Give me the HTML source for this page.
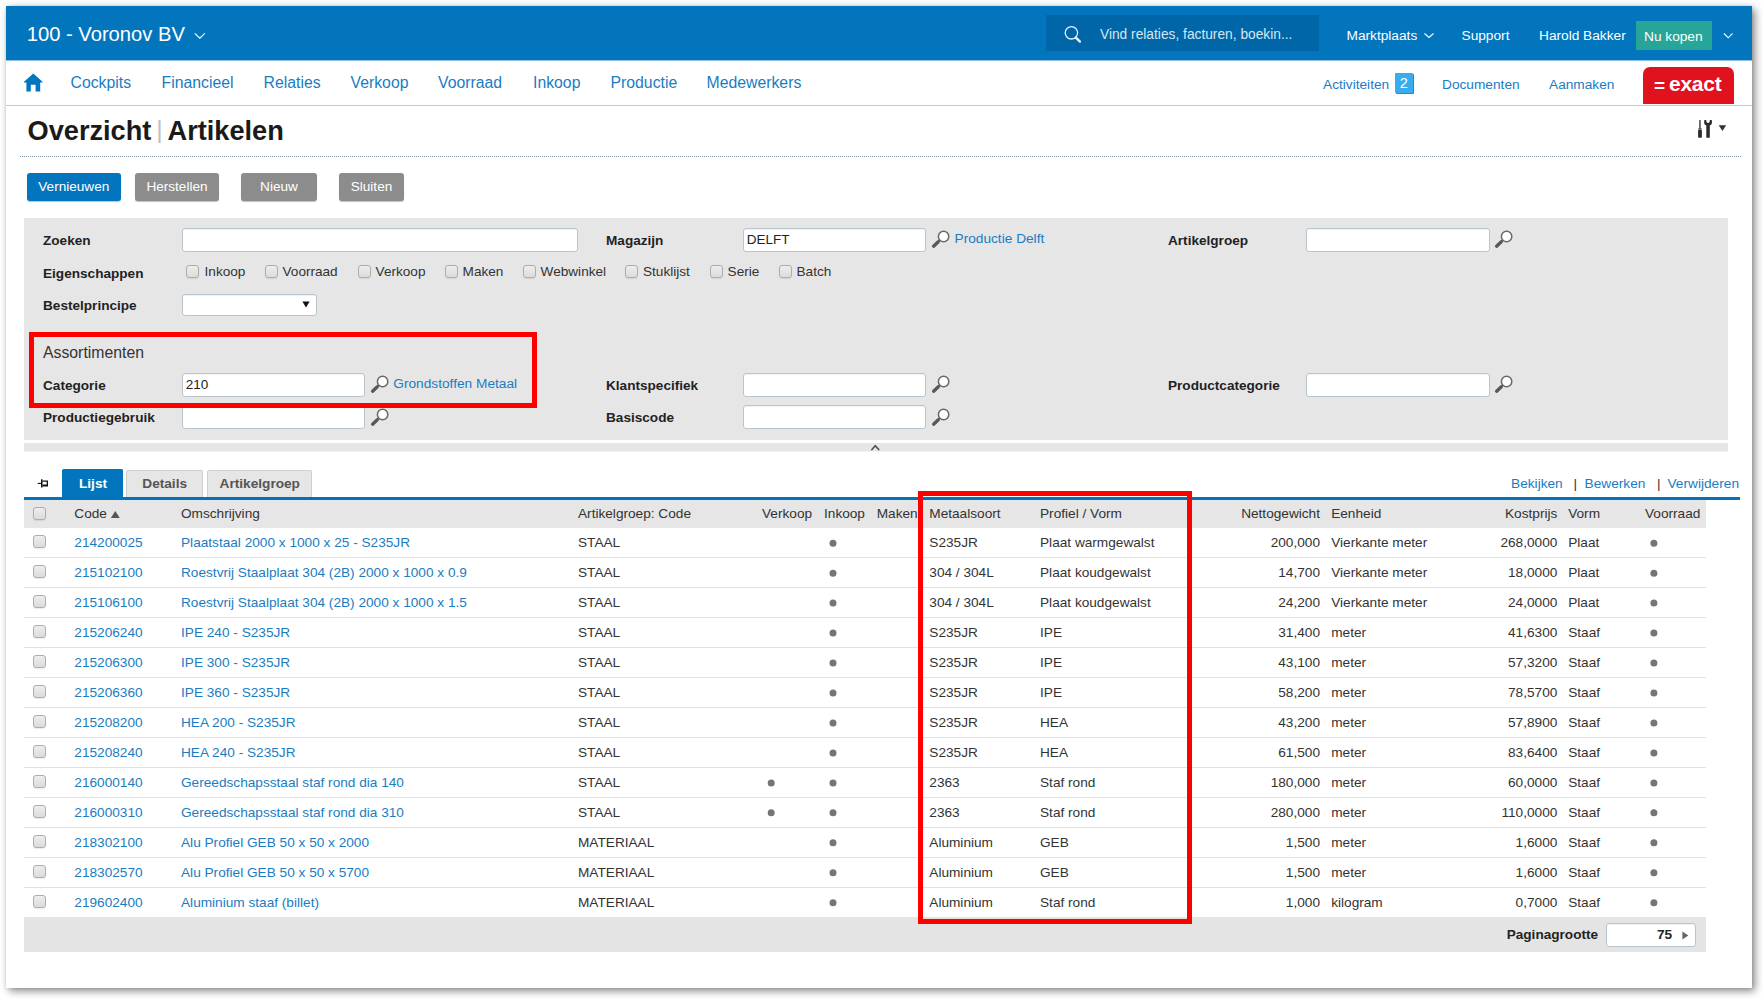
<!DOCTYPE html>
<html lang="nl"><head><meta charset="utf-8"><title>Overzicht | Artikelen</title>
<style>
html,body{margin:0;padding:0;background:#fff;}
body{width:1763px;height:999px;position:relative;overflow:hidden;font-family:"Liberation Sans",sans-serif;color:#333;font-size:13.65px;}
#frame{position:absolute;left:6px;top:6px;width:1746px;height:982px;background:#fff;box-shadow:3px 3px 8px rgba(0,0,0,.47),0 0 3px rgba(0,0,0,.10);}
#page{position:absolute;left:0;top:0;width:1763px;height:999px;}
.abs,.t,.cb,.mag,.inp,.btn,.tab,.dot{position:absolute;}
.t{white-space:nowrap;line-height:20px;}
.b{font-weight:bold;color:#222;}
.lk{color:#1b7cc2;}
.w{color:#fff;}
.nav{font-size:15.8px;color:#1b7cc2;}
.cb{width:11px;height:11px;border:1px solid #adadad;border-radius:3px;background:linear-gradient(#ededed,#dcdcdc);box-shadow:0 1px 1px rgba(0,0,0,.08);}
.inp{height:22px;border:1px solid #b9c5cd;border-radius:3px;background:#fff;box-shadow:inset 0 1px 1px rgba(0,0,0,.06);}
.btn{top:173px;height:28px;line-height:27.5px;border-radius:3px;color:#fff;text-align:center;font-size:13.6px;box-shadow:0 1px 1px rgba(0,0,0,.25);}
.tab{top:469.5px;height:28px;line-height:28px;text-align:center;font-weight:bold;box-sizing:border-box;border:1px solid #d0d0d0;border-bottom:none;background:#e6e6e6;color:#555;border-radius:2px 2px 0 0;}
.dot{width:7px;height:7px;border-radius:50%;background:#707070;}
.ln{position:absolute;left:24px;width:1682px;height:1px;background:#e2e2e2;}
</style></head><body>
<div id="frame"></div>
<div id="page">

<div class="abs" style="left:6px;top:6px;width:1746px;height:54px;background:#0275bc"></div><div class="abs" style="left:6px;top:60px;width:1746px;height:1px;background:rgba(2,117,188,.45)"></div>
<span class="t w" style="left:26.7px;top:24px;font-size:20.2px">100 - Voronov BV</span>
<svg class="abs" style="left:193px;top:31px" width="14" height="10" viewBox="0 0 14 10"><path d="M1.8 2.4 L6.8 7.2 L11.8 2.4" fill="none" stroke="#fff" stroke-width="1.15"/></svg>
<div class="abs" style="left:1045.5px;top:15px;width:273px;height:36px;background:#0066a8"></div>
<svg class="abs" style="left:1062px;top:24px" width="22" height="21" viewBox="0 0 22 21"><circle cx="9.4" cy="8.8" r="6.2" fill="none" stroke="#e8f2fa" stroke-width="1.3"/><path d="M13.9 13.6 L17.9 17.6" stroke="#e8f2fa" stroke-width="2.4" stroke-linecap="round"/></svg>
<span class="t " style="left:1100px;top:25px;color:#d3e6f4;font-size:13.75px">Vind relaties, facturen, boekin...</span>
<span class="t w" style="left:1346.5px;top:26px;font-size:13.7px">Marktplaats</span>
<svg class="abs" style="left:1423px;top:31px" width="12" height="9" viewBox="0 0 12 9"><path d="M1.5 2.5 L6 6.5 L10.5 2.5" fill="none" stroke="#fff" stroke-width="1.1"/></svg>
<span class="t w" style="left:1461.5px;top:26px;font-size:13.7px">Support</span>
<span class="t w" style="left:1539px;top:26px;font-size:13.7px">Harold Bakker</span>
<div class="abs" style="left:1635.5px;top:21px;width:76.5px;height:29px;background:#27a599"></div>
<span class="t w" style="left:1644px;top:27px;font-size:13.7px">Nu kopen</span>
<svg class="abs" style="left:1722px;top:31px" width="12" height="9" viewBox="0 0 12 9"><path d="M2 2.5 L6.2 6.8 L10.5 2.5" fill="none" stroke="#fff" stroke-width="1.1"/></svg>
<div class="abs" style="left:6px;top:105px;width:1746px;height:1px;background:#c8c8c8"></div>
<svg class="abs" style="left:23px;top:73px" width="21" height="20" viewBox="0 0 21 20"><path d="M10.3 0.5 L1.0 8.7 L1.0 9.4 L3.4 9.4 L3.4 18.6 L7.8 18.6 L7.8 11.8 L12.6 11.8 L12.6 18.6 L17.2 18.6 L17.2 9.4 L19.5 9.4 L19.5 8.7 Z" fill="#0476be"/></svg>
<span class="t nav" style="left:70.5px;top:73px;">Cockpits</span>
<span class="t nav" style="left:161.5px;top:73px;">Financieel</span>
<span class="t nav" style="left:263.5px;top:73px;">Relaties</span>
<span class="t nav" style="left:350.5px;top:73px;">Verkoop</span>
<span class="t nav" style="left:438px;top:73px;">Voorraad</span>
<span class="t nav" style="left:533px;top:73px;">Inkoop</span>
<span class="t nav" style="left:610.5px;top:73px;">Productie</span>
<span class="t nav" style="left:706.5px;top:73px;">Medewerkers</span>
<span class="t lk" style="left:1323px;top:75px;font-size:13.7px">Activiteiten</span>
<div class="abs" style="left:1395px;top:73px;width:17.5px;height:19.5px;background:#38adee;border-radius:1px;box-shadow:1px 1px 0 #2b88c6,1px 1px 1px rgba(0,0,0,.2);color:#fff;text-align:center;line-height:21px;font-size:14.5px">2</div>
<span class="t lk" style="left:1442px;top:75px;font-size:13.7px">Documenten</span>
<span class="t lk" style="left:1549px;top:75px;font-size:13.7px">Aanmaken</span>
<div class="abs" style="left:1643px;top:67px;width:91px;height:36.5px;background:#e0121d;border-radius:7px 7px 0 0"></div>
<span class="t w b" style="left:1654px;top:76px;font-size:19px;color:#fff">=</span>
<span class="t w b" style="left:1669px;top:74px;font-size:21px;color:#fff;letter-spacing:-0.25px">exact</span>
<span class="t b" style="left:27.5px;top:121px;font-size:27.2px;color:#1a1a1a">Overzicht</span>
<span class="abs" style="left:156.3px;top:116.2px;font-size:24.6px;line-height:28px;color:#b9c1c9">|</span>
<span class="t b" style="left:167.5px;top:121px;font-size:27.2px;color:#1a1a1a">Artikelen</span>
<div class="abs" style="left:20px;top:156px;width:1721px;height:0;border-top:1px dotted #8195a1"></div>
<svg class="abs" style="left:1696px;top:119px" width="32" height="20" viewBox="0 0 32 20"><rect x="3.1" y="1" width="1.7" height="8.8" rx="0.5" fill="#5a5a5a"/><rect x="2.4" y="9.2" width="3.1" height="1.4" fill="#444"/><rect x="2.1" y="10.8" width="3.8" height="8" rx="0.8" fill="#2b2b2b"/><path d="M8.2 1.6 Q8.2 1 8.9 1 L9.9 1 Q10.4 1 10.4 1.6 L10.4 2.6 Q10.4 3.9 12.05 3.9 Q13.7 3.9 13.7 2.6 L13.7 1.6 Q13.7 1 14.3 1 L15.3 1 Q15.9 1 15.9 1.6 L15.9 4.2 Q15.9 5.8 13.8 6.4 L13.8 18.2 Q13.8 18.8 13.2 18.8 L10.9 18.8 Q10.3 18.8 10.3 18.2 L10.3 6.4 Q8.2 5.8 8.2 4.2 Z" fill="#2b2b2b"/><path d="M22.7 6.2 L30.2 6.2 L26.45 12.1 Z" fill="#333"/></svg>
<div class="btn" style="left:27px;width:93.6px;background:#0375be">Vernieuwen</div>
<div class="btn" style="left:135px;width:84px;background:#8c8c8c">Herstellen</div>
<div class="btn" style="left:241px;width:76px;background:#8c8c8c">Nieuw</div>
<div class="btn" style="left:339px;width:65px;background:#8c8c8c">Sluiten</div>
<div class="abs" style="left:24px;top:218px;width:1703.5px;height:222px;background:#e6e6e6"></div>
<div class="abs" style="left:24px;top:443px;width:1703.5px;height:8px;background:#e6e6e6"></div><div class="abs" style="left:24px;top:451px;width:1703.5px;height:1px;background:#f1f1f1"></div>
<svg class="abs" style="left:869px;top:443px" width="12" height="8" viewBox="0 0 12 8"><path d="M2.9 6.5 L6.3 2.7 L9.7 6.5" fill="none" stroke="#505050" stroke-width="1.7" stroke-linecap="round" stroke-linejoin="round"/></svg>
<span class="t b" style="left:43px;top:231px;font-size:13.6px">Zoeken</span>
<span class="t b" style="left:43px;top:264px;font-size:13.6px">Eigenschappen</span>
<span class="t b" style="left:43px;top:296px;font-size:13.6px">Bestelprincipe</span>
<span class="t b" style="left:43px;top:376px;font-size:13.6px">Categorie</span>
<span class="t b" style="left:43px;top:408px;font-size:13.6px">Productiegebruik</span>
<span class="t b" style="left:606px;top:231px;font-size:13.6px">Magazijn</span>
<span class="t b" style="left:606px;top:376px;font-size:13.6px">Klantspecifiek</span>
<span class="t b" style="left:606px;top:408px;font-size:13.6px">Basiscode</span>
<span class="t b" style="left:1168px;top:231px;font-size:13.6px">Artikelgroep</span>
<span class="t b" style="left:1168px;top:376px;font-size:13.6px">Productcategorie</span>
<span class="t " style="left:43px;top:343px;font-size:15.8px;color:#333">Assortimenten</span>
<div class="inp" style="left:181.6px;top:228px;width:394.5px"></div>
<div class="inp" style="left:742.5px;top:228px;width:181.3px"><span style="position:absolute;left:3.2px;top:1px;line-height:20px;font-size:13.5px;color:#222">DELFT</span></div>
<div class="inp" style="left:1306px;top:228px;width:181.8px"></div>
<div class="inp" style="left:181.6px;top:373px;width:181.8px"><span style="position:absolute;left:3.2px;top:1px;line-height:20px;font-size:13.5px;color:#222">210</span></div>
<div class="inp" style="left:742.5px;top:373px;width:181.3px"></div>
<div class="inp" style="left:1306px;top:373px;width:181.8px"></div>
<div class="inp" style="left:181.6px;top:405px;width:181.8px"></div>
<div class="inp" style="left:742.5px;top:405px;width:181.3px"></div>
<div class="inp" style="left:181.6px;top:294px;width:133.3px;height:20px"></div>
<svg class="abs" style="left:301px;top:300px" width="10" height="9" viewBox="0 0 10 9"><path d="M1.4 1.6 L8.6 1.6 L5 7.6 Z" fill="#111"/></svg>
<svg class="mag" style="left:930.8px;top:230px" width="20" height="19" viewBox="0 0 20 19"><circle cx="12.6" cy="6.5" r="5.2" fill="#fff" stroke="#686868" stroke-width="1.5"/><path d="M9 10.2 L7 12" stroke="#606060" stroke-width="1.6"/><path d="M7.3 11.7 L2.6 16.2" stroke="#585858" stroke-width="3.3" stroke-linecap="round"/></svg>
<svg class="mag" style="left:1494.3px;top:230px" width="20" height="19" viewBox="0 0 20 19"><circle cx="12.6" cy="6.5" r="5.2" fill="#fff" stroke="#686868" stroke-width="1.5"/><path d="M9 10.2 L7 12" stroke="#606060" stroke-width="1.6"/><path d="M7.3 11.7 L2.6 16.2" stroke="#585858" stroke-width="3.3" stroke-linecap="round"/></svg>
<svg class="mag" style="left:370px;top:374.5px" width="20" height="19" viewBox="0 0 20 19"><circle cx="12.6" cy="6.5" r="5.2" fill="#fff" stroke="#686868" stroke-width="1.5"/><path d="M9 10.2 L7 12" stroke="#606060" stroke-width="1.6"/><path d="M7.3 11.7 L2.6 16.2" stroke="#585858" stroke-width="3.3" stroke-linecap="round"/></svg>
<svg class="mag" style="left:930.8px;top:374.5px" width="20" height="19" viewBox="0 0 20 19"><circle cx="12.6" cy="6.5" r="5.2" fill="#fff" stroke="#686868" stroke-width="1.5"/><path d="M9 10.2 L7 12" stroke="#606060" stroke-width="1.6"/><path d="M7.3 11.7 L2.6 16.2" stroke="#585858" stroke-width="3.3" stroke-linecap="round"/></svg>
<svg class="mag" style="left:1494.3px;top:374.5px" width="20" height="19" viewBox="0 0 20 19"><circle cx="12.6" cy="6.5" r="5.2" fill="#fff" stroke="#686868" stroke-width="1.5"/><path d="M9 10.2 L7 12" stroke="#606060" stroke-width="1.6"/><path d="M7.3 11.7 L2.6 16.2" stroke="#585858" stroke-width="3.3" stroke-linecap="round"/></svg>
<svg class="mag" style="left:370px;top:407.5px" width="20" height="19" viewBox="0 0 20 19"><circle cx="12.6" cy="6.5" r="5.2" fill="#fff" stroke="#686868" stroke-width="1.5"/><path d="M9 10.2 L7 12" stroke="#606060" stroke-width="1.6"/><path d="M7.3 11.7 L2.6 16.2" stroke="#585858" stroke-width="3.3" stroke-linecap="round"/></svg>
<svg class="mag" style="left:930.8px;top:407.5px" width="20" height="19" viewBox="0 0 20 19"><circle cx="12.6" cy="6.5" r="5.2" fill="#fff" stroke="#686868" stroke-width="1.5"/><path d="M9 10.2 L7 12" stroke="#606060" stroke-width="1.6"/><path d="M7.3 11.7 L2.6 16.2" stroke="#585858" stroke-width="3.3" stroke-linecap="round"/></svg>
<span class="t lk" style="left:954.5px;top:229px;font-size:13.7px">Productie Delft</span>
<span class="t lk" style="left:393.3px;top:374px;font-size:13.7px">Grondstoffen Metaal</span>
<i class="cb" style="left:186.2px;top:265px"></i>
<span class="t " style="left:204.6px;top:262px;font-size:13.6px">Inkoop</span>
<i class="cb" style="left:264.5px;top:265px"></i>
<span class="t " style="left:282.5px;top:262px;font-size:13.6px">Voorraad</span>
<i class="cb" style="left:357.5px;top:265px"></i>
<span class="t " style="left:375.6px;top:262px;font-size:13.6px">Verkoop</span>
<i class="cb" style="left:445px;top:265px"></i>
<span class="t " style="left:462.6px;top:262px;font-size:13.6px">Maken</span>
<i class="cb" style="left:523px;top:265px"></i>
<span class="t " style="left:540.6px;top:262px;font-size:13.6px">Webwinkel</span>
<i class="cb" style="left:625.2px;top:265px"></i>
<span class="t " style="left:643px;top:262px;font-size:13.6px">Stuklijst</span>
<i class="cb" style="left:709.8px;top:265px"></i>
<span class="t " style="left:727.6px;top:262px;font-size:13.6px">Serie</span>
<i class="cb" style="left:779.2px;top:265px"></i>
<span class="t " style="left:796.5px;top:262px;font-size:13.6px">Batch</span>
<div class="abs" style="left:29px;top:332px;width:498px;height:66px;border:5px solid #fe0000"></div>
<svg class="abs" style="left:37px;top:478px" width="12" height="11" viewBox="0 0 12 11"><path d="M0.7 5.4 L4.2 5.4" stroke="#111" stroke-width="1.1"/><rect x="4" y="1.3" width="1.5" height="8.2" fill="#111"/><path d="M5.4 2.5 H11 V8.6 H5.4 V6.5 H9.7 V3.8 H5.4 Z" fill="#111"/></svg>
<div class="tab" style="left:62.4px;top:469px;height:28.5px;width:60.6px;background:#0275bc;border-color:#0275bc"></div>
<span class="t b" style="left:79px;top:474px;font-size:13.65px;color:#fff">Lijst</span>
<div class="tab" style="left:126.4px;width:76.6px"></div>
<span class="t b" style="left:142.3px;top:474px;font-size:13.65px;color:#555">Details</span>
<div class="tab" style="left:207.2px;width:105px"></div>
<span class="t b" style="left:219.6px;top:474px;font-size:13.65px;color:#555">Artikelgroep</span>
<div class="abs" style="left:24px;top:497px;width:1716px;height:3px;background:#0272ba"></div>
<span class="t lk" style="left:1511px;top:474px;font-size:13.7px">Bekijken</span>
<span class="t " style="left:1573.5px;top:474px;font-size:13.7px">|</span>
<span class="t lk" style="left:1584.5px;top:474px;font-size:13.7px">Bewerken</span>
<span class="t " style="left:1657px;top:474px;font-size:13.7px">|</span>
<span class="t lk" style="left:1667.5px;top:474px;font-size:13.7px">Verwijderen</span>
<div class="abs" style="left:24px;top:500px;width:1682px;height:27.7px;background:#e6e6e6"></div>
<i class="cb" style="left:33px;top:507px"></i>
<span class="t " style="left:74.3px;top:504px;">Code</span>
<svg class="abs" style="left:110px;top:510px" width="11" height="9" viewBox="0 0 11 9"><path d="M0.8 8 L9.8 8 L5.3 1 Z" fill="#555"/></svg>
<span class="t " style="left:181px;top:504px;">Omschrijving</span>
<span class="t " style="left:578px;top:504px;">Artikelgroep: Code</span>
<span class="t " style="left:762px;top:504px;">Verkoop</span>
<span class="t " style="left:824px;top:504px;">Inkoop</span>
<span class="t " style="left:876.7px;top:504px;">Maken</span>
<span class="t " style="left:929.3px;top:504px;">Metaalsoort</span>
<span class="t " style="left:1040px;top:504px;">Profiel / Vorm</span>
<span class="t " style="right:443px;top:504px;">Nettogewicht</span>
<span class="t " style="left:1331.2px;top:504px;">Eenheid</span>
<span class="t " style="right:205.70000000000005px;top:504px;">Kostprijs</span>
<span class="t " style="left:1568.2px;top:504px;">Vorm</span>
<span class="t " style="left:1645px;top:504px;">Voorraad</span>
<i class="cb" style="left:33px;top:535.2px"></i>
<span class="t lk" style="left:74.3px;top:533px;">214200025</span>
<span class="t lk" style="left:181px;top:533px;">Plaatstaal 2000 x 1000 x 25 - S235JR</span>
<span class="t " style="left:578px;top:533px;">STAAL</span>
<span class="t " style="left:929.3px;top:533px;">S235JR</span>
<span class="t " style="left:1040px;top:533px;">Plaat warmgewalst</span>
<span class="t " style="right:443px;top:533px;">200,000</span>
<span class="t " style="left:1331.2px;top:533px;">Vierkante meter</span>
<span class="t " style="right:205.70000000000005px;top:533px;">268,0000</span>
<span class="t " style="left:1568.2px;top:533px;">Plaat</span>
<div class="ln" style="top:557.2px"></div>
<i class="cb" style="left:33px;top:565.2px"></i>
<span class="t lk" style="left:74.3px;top:563px;">215102100</span>
<span class="t lk" style="left:181px;top:563px;">Roestvrij Staalplaat 304 (2B) 2000 x 1000 x 0.9</span>
<span class="t " style="left:578px;top:563px;">STAAL</span>
<span class="t " style="left:929.3px;top:563px;">304 / 304L</span>
<span class="t " style="left:1040px;top:563px;">Plaat koudgewalst</span>
<span class="t " style="right:443px;top:563px;">14,700</span>
<span class="t " style="left:1331.2px;top:563px;">Vierkante meter</span>
<span class="t " style="right:205.70000000000005px;top:563px;">18,0000</span>
<span class="t " style="left:1568.2px;top:563px;">Plaat</span>
<div class="ln" style="top:587.1px"></div>
<i class="cb" style="left:33px;top:595.1px"></i>
<span class="t lk" style="left:74.3px;top:593px;">215106100</span>
<span class="t lk" style="left:181px;top:593px;">Roestvrij Staalplaat 304 (2B) 2000 x 1000 x 1.5</span>
<span class="t " style="left:578px;top:593px;">STAAL</span>
<span class="t " style="left:929.3px;top:593px;">304 / 304L</span>
<span class="t " style="left:1040px;top:593px;">Plaat koudgewalst</span>
<span class="t " style="right:443px;top:593px;">24,200</span>
<span class="t " style="left:1331.2px;top:593px;">Vierkante meter</span>
<span class="t " style="right:205.70000000000005px;top:593px;">24,0000</span>
<span class="t " style="left:1568.2px;top:593px;">Plaat</span>
<div class="ln" style="top:617.1px"></div>
<i class="cb" style="left:33px;top:625.1px"></i>
<span class="t lk" style="left:74.3px;top:623px;">215206240</span>
<span class="t lk" style="left:181px;top:623px;">IPE 240 - S235JR</span>
<span class="t " style="left:578px;top:623px;">STAAL</span>
<span class="t " style="left:929.3px;top:623px;">S235JR</span>
<span class="t " style="left:1040px;top:623px;">IPE</span>
<span class="t " style="right:443px;top:623px;">31,400</span>
<span class="t " style="left:1331.2px;top:623px;">meter</span>
<span class="t " style="right:205.70000000000005px;top:623px;">41,6300</span>
<span class="t " style="left:1568.2px;top:623px;">Staaf</span>
<div class="ln" style="top:647.0px"></div>
<i class="cb" style="left:33px;top:655.0px"></i>
<span class="t lk" style="left:74.3px;top:653px;">215206300</span>
<span class="t lk" style="left:181px;top:653px;">IPE 300 - S235JR</span>
<span class="t " style="left:578px;top:653px;">STAAL</span>
<span class="t " style="left:929.3px;top:653px;">S235JR</span>
<span class="t " style="left:1040px;top:653px;">IPE</span>
<span class="t " style="right:443px;top:653px;">43,100</span>
<span class="t " style="left:1331.2px;top:653px;">meter</span>
<span class="t " style="right:205.70000000000005px;top:653px;">57,3200</span>
<span class="t " style="left:1568.2px;top:653px;">Staaf</span>
<div class="ln" style="top:677.0px"></div>
<i class="cb" style="left:33px;top:685.0px"></i>
<span class="t lk" style="left:74.3px;top:683px;">215206360</span>
<span class="t lk" style="left:181px;top:683px;">IPE 360 - S235JR</span>
<span class="t " style="left:578px;top:683px;">STAAL</span>
<span class="t " style="left:929.3px;top:683px;">S235JR</span>
<span class="t " style="left:1040px;top:683px;">IPE</span>
<span class="t " style="right:443px;top:683px;">58,200</span>
<span class="t " style="left:1331.2px;top:683px;">meter</span>
<span class="t " style="right:205.70000000000005px;top:683px;">78,5700</span>
<span class="t " style="left:1568.2px;top:683px;">Staaf</span>
<div class="ln" style="top:707.0px"></div>
<i class="cb" style="left:33px;top:715.0px"></i>
<span class="t lk" style="left:74.3px;top:713px;">215208200</span>
<span class="t lk" style="left:181px;top:713px;">HEA 200 - S235JR</span>
<span class="t " style="left:578px;top:713px;">STAAL</span>
<span class="t " style="left:929.3px;top:713px;">S235JR</span>
<span class="t " style="left:1040px;top:713px;">HEA</span>
<span class="t " style="right:443px;top:713px;">43,200</span>
<span class="t " style="left:1331.2px;top:713px;">meter</span>
<span class="t " style="right:205.70000000000005px;top:713px;">57,8900</span>
<span class="t " style="left:1568.2px;top:713px;">Staaf</span>
<div class="ln" style="top:736.9px"></div>
<i class="cb" style="left:33px;top:744.9px"></i>
<span class="t lk" style="left:74.3px;top:743px;">215208240</span>
<span class="t lk" style="left:181px;top:743px;">HEA 240 - S235JR</span>
<span class="t " style="left:578px;top:743px;">STAAL</span>
<span class="t " style="left:929.3px;top:743px;">S235JR</span>
<span class="t " style="left:1040px;top:743px;">HEA</span>
<span class="t " style="right:443px;top:743px;">61,500</span>
<span class="t " style="left:1331.2px;top:743px;">meter</span>
<span class="t " style="right:205.70000000000005px;top:743px;">83,6400</span>
<span class="t " style="left:1568.2px;top:743px;">Staaf</span>
<div class="ln" style="top:766.9px"></div>
<i class="cb" style="left:33px;top:774.9px"></i>
<span class="t lk" style="left:74.3px;top:773px;">216000140</span>
<span class="t lk" style="left:181px;top:773px;">Gereedschapsstaal staf rond dia 140</span>
<span class="t " style="left:578px;top:773px;">STAAL</span>
<span class="t " style="left:929.3px;top:773px;">2363</span>
<span class="t " style="left:1040px;top:773px;">Staf rond</span>
<span class="t " style="right:443px;top:773px;">180,000</span>
<span class="t " style="left:1331.2px;top:773px;">meter</span>
<span class="t " style="right:205.70000000000005px;top:773px;">60,0000</span>
<span class="t " style="left:1568.2px;top:773px;">Staaf</span>
<div class="ln" style="top:796.8px"></div>
<i class="cb" style="left:33px;top:804.8px"></i>
<span class="t lk" style="left:74.3px;top:803px;">216000310</span>
<span class="t lk" style="left:181px;top:803px;">Gereedschapsstaal staf rond dia 310</span>
<span class="t " style="left:578px;top:803px;">STAAL</span>
<span class="t " style="left:929.3px;top:803px;">2363</span>
<span class="t " style="left:1040px;top:803px;">Staf rond</span>
<span class="t " style="right:443px;top:803px;">280,000</span>
<span class="t " style="left:1331.2px;top:803px;">meter</span>
<span class="t " style="right:205.70000000000005px;top:803px;">110,0000</span>
<span class="t " style="left:1568.2px;top:803px;">Staaf</span>
<div class="ln" style="top:826.8px"></div>
<i class="cb" style="left:33px;top:834.8px"></i>
<span class="t lk" style="left:74.3px;top:833px;">218302100</span>
<span class="t lk" style="left:181px;top:833px;">Alu Profiel GEB 50 x 50 x 2000</span>
<span class="t " style="left:578px;top:833px;">MATERIAAL</span>
<span class="t " style="left:929.3px;top:833px;">Aluminium</span>
<span class="t " style="left:1040px;top:833px;">GEB</span>
<span class="t " style="right:443px;top:833px;">1,500</span>
<span class="t " style="left:1331.2px;top:833px;">meter</span>
<span class="t " style="right:205.70000000000005px;top:833px;">1,6000</span>
<span class="t " style="left:1568.2px;top:833px;">Staaf</span>
<div class="ln" style="top:856.8px"></div>
<i class="cb" style="left:33px;top:864.8px"></i>
<span class="t lk" style="left:74.3px;top:863px;">218302570</span>
<span class="t lk" style="left:181px;top:863px;">Alu Profiel GEB 50 x 50 x 5700</span>
<span class="t " style="left:578px;top:863px;">MATERIAAL</span>
<span class="t " style="left:929.3px;top:863px;">Aluminium</span>
<span class="t " style="left:1040px;top:863px;">GEB</span>
<span class="t " style="right:443px;top:863px;">1,500</span>
<span class="t " style="left:1331.2px;top:863px;">meter</span>
<span class="t " style="right:205.70000000000005px;top:863px;">1,6000</span>
<span class="t " style="left:1568.2px;top:863px;">Staaf</span>
<div class="ln" style="top:886.7px"></div>
<i class="cb" style="left:33px;top:894.7px"></i>
<span class="t lk" style="left:74.3px;top:893px;">219602400</span>
<span class="t lk" style="left:181px;top:893px;">Aluminium staaf (billet)</span>
<span class="t " style="left:578px;top:893px;">MATERIAAL</span>
<span class="t " style="left:929.3px;top:893px;">Aluminium</span>
<span class="t " style="left:1040px;top:893px;">Staf rond</span>
<span class="t " style="right:443px;top:893px;">1,000</span>
<span class="t " style="left:1331.2px;top:893px;">kilogram</span>
<span class="t " style="right:205.70000000000005px;top:893px;">0,7000</span>
<span class="t " style="left:1568.2px;top:893px;">Staaf</span>
<svg class="abs" style="left:0;top:0" width="1763" height="999" viewBox="0 0 1763 999"><circle cx="833.0" cy="543.2" r="3.5" fill="#757575"/><circle cx="1653.9" cy="543.2" r="3.5" fill="#757575"/><circle cx="833.0" cy="573.2" r="3.5" fill="#757575"/><circle cx="1653.9" cy="573.2" r="3.5" fill="#757575"/><circle cx="833.0" cy="603.1" r="3.5" fill="#757575"/><circle cx="1653.9" cy="603.1" r="3.5" fill="#757575"/><circle cx="833.0" cy="633.1" r="3.5" fill="#757575"/><circle cx="1653.9" cy="633.1" r="3.5" fill="#757575"/><circle cx="833.0" cy="663.0" r="3.5" fill="#757575"/><circle cx="1653.9" cy="663.0" r="3.5" fill="#757575"/><circle cx="833.0" cy="693.0" r="3.5" fill="#757575"/><circle cx="1653.9" cy="693.0" r="3.5" fill="#757575"/><circle cx="833.0" cy="723.0" r="3.5" fill="#757575"/><circle cx="1653.9" cy="723.0" r="3.5" fill="#757575"/><circle cx="833.0" cy="752.9" r="3.5" fill="#757575"/><circle cx="1653.9" cy="752.9" r="3.5" fill="#757575"/><circle cx="771.2" cy="782.9" r="3.5" fill="#757575"/><circle cx="833.0" cy="782.9" r="3.5" fill="#757575"/><circle cx="1653.9" cy="782.9" r="3.5" fill="#757575"/><circle cx="771.2" cy="812.8" r="3.5" fill="#757575"/><circle cx="833.0" cy="812.8" r="3.5" fill="#757575"/><circle cx="1653.9" cy="812.8" r="3.5" fill="#757575"/><circle cx="833.0" cy="842.8" r="3.5" fill="#757575"/><circle cx="1653.9" cy="842.8" r="3.5" fill="#757575"/><circle cx="833.0" cy="872.8" r="3.5" fill="#757575"/><circle cx="1653.9" cy="872.8" r="3.5" fill="#757575"/><circle cx="833.0" cy="902.7" r="3.5" fill="#757575"/><circle cx="1653.9" cy="902.7" r="3.5" fill="#757575"/></svg>
<div class="abs" style="left:24px;top:917px;width:1682px;height:35px;background:#e4e4e4"></div>
<span class="t b" style="left:1506.7px;top:925px;font-size:13.6px">Paginagrootte</span>
<div class="inp" style="left:1606px;top:923px;width:87.5px;height:22px"></div>
<span class="t b" style="left:1657px;top:925px;font-size:13.7px">75</span>
<svg class="abs" style="left:1681px;top:930px" width="9" height="11" viewBox="0 0 9 11"><path d="M1.4 1.4 L7.4 5.5 L1.4 9.6 Z" fill="#666"/></svg>
<div class="abs" style="left:918px;top:491px;width:264px;height:423px;border:5px solid #fe0000"></div>
</div></body></html>
